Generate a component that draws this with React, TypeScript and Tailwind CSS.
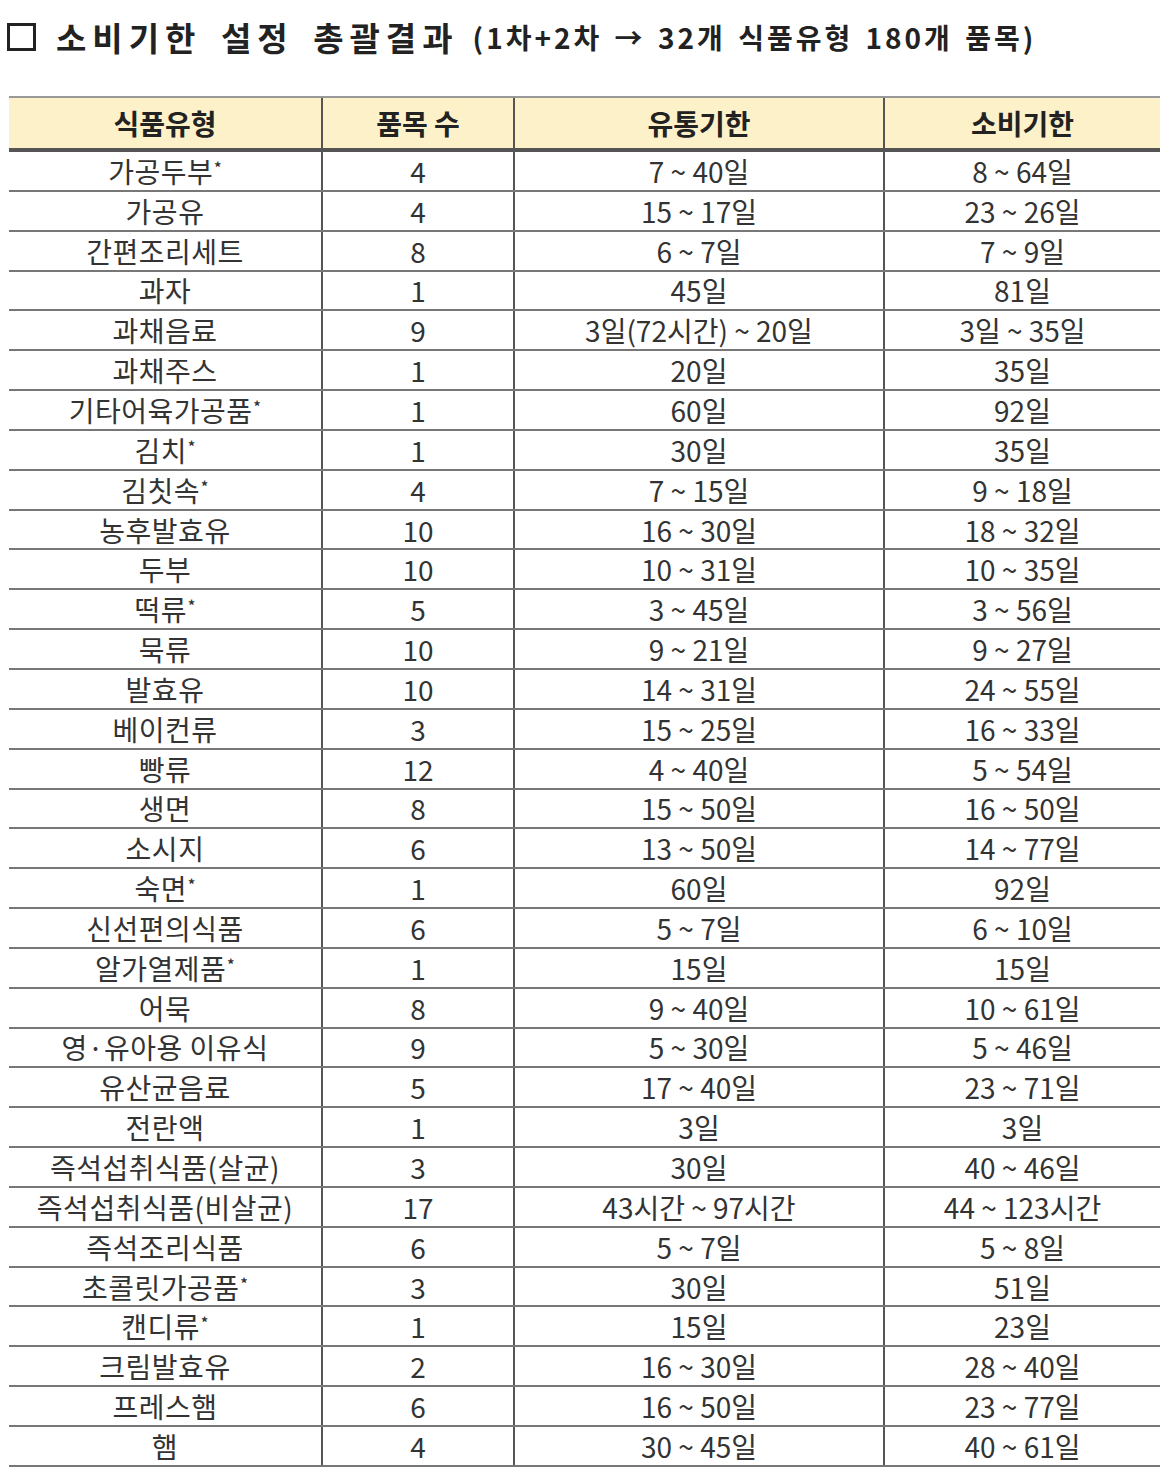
const rows: [string, boolean, string, string, string][] = [
  ['가공두부', true, '4', '7 ~ 40일', '8 ~ 64일'],
  ['가공유', false, '4', '15 ~ 17일', '23 ~ 26일'],
  ['간편조리세트', false, '8', '6 ~ 7일', '7 ~ 9일'],
  ['과자', false, '1', '45일', '81일'],
  ['과채음료', false, '9', '3일(72시간) ~ 20일', '3일 ~ 35일'],
  ['과채주스', false, '1', '20일', '35일'],
  ['기타어육가공품', true, '1', '60일', '92일'],
  ['김치', true, '1', '30일', '35일'],
  ['김칫속', true, '4', '7 ~ 15일', '9 ~ 18일'],
  ['농후발효유', false, '10', '16 ~ 30일', '18 ~ 32일'],
  ['두부', false, '10', '10 ~ 31일', '10 ~ 35일'],
  ['떡류', true, '5', '3 ~ 45일', '3 ~ 56일'],
  ['묵류', false, '10', '9 ~ 21일', '9 ~ 27일'],
  ['발효유', false, '10', '14 ~ 31일', '24 ~ 55일'],
  ['베이컨류', false, '3', '15 ~ 25일', '16 ~ 33일'],
  ['빵류', false, '12', '4 ~ 40일', '5 ~ 54일'],
  ['생면', false, '8', '15 ~ 50일', '16 ~ 50일'],
  ['소시지', false, '6', '13 ~ 50일', '14 ~ 77일'],
  ['숙면', true, '1', '60일', '92일'],
  ['신선편의식품', false, '6', '5 ~ 7일', '6 ~ 10일'],
  ['알가열제품', true, '1', '15일', '15일'],
  ['어묵', false, '8', '9 ~ 40일', '10 ~ 61일'],
  ['영·유아용 이유식', false, '9', '5 ~ 30일', '5 ~ 46일'],
  ['유산균음료', false, '5', '17 ~ 40일', '23 ~ 71일'],
  ['전란액', false, '1', '3일', '3일'],
  ['즉석섭취식품(살균)', false, '3', '30일', '40 ~ 46일'],
  ['즉석섭취식품(비살균)', false, '17', '43시간 ~ 97시간', '44 ~ 123시간'],
  ['즉석조리식품', false, '6', '5 ~ 7일', '5 ~ 8일'],
  ['초콜릿가공품', true, '3', '30일', '51일'],
  ['캔디류', true, '1', '15일', '23일'],
  ['크림발효유', false, '2', '16 ~ 30일', '28 ~ 40일'],
  ['프레스햄', false, '6', '16 ~ 50일', '23 ~ 77일'],
  ['햄', false, '4', '30 ~ 45일', '40 ~ 61일'],
];

const font = { fontFamily: '"Noto Sans CJK KR", "Noto Sans", sans-serif' };

export default function App() {
  return (
    <div className="w-[1176px] h-[1476px] bg-white text-[#333]" style={font}>
      <div className="flex items-center pl-[7px] pt-[12px] h-[62px]">
        <div className="w-[29px] h-[28px] border-[3px] border-[#222] shrink-0" />
        <div className="ml-[20px] text-[33px] font-bold text-[#222] tracking-[6px] [word-spacing:6px] leading-none">
          소비기한 설정 총괄결과
        </div>
        <div className="ml-[14px] text-[28px] font-bold text-[#222] tracking-[3px] [word-spacing:3px] leading-none">
          (1차+2차 → 32개 식품유형 180개 품목)
        </div>
      </div>

      <div className="ml-[9px] mt-[34px] w-[1151px]">
        <div className="flex h-[56px] bg-[#fdf1c9] border-t-2 border-[#999] border-b-[4px] border-b-[#555] text-[28px] font-bold text-[#222]">
          <div className="w-[314px] flex items-center justify-center border-r-2 border-[#555]">식품유형</div>
          <div className="w-[192px] flex items-center justify-center border-r-2 border-[#555]">품목 수</div>
          <div className="w-[370px] flex items-center justify-center border-r-2 border-[#555]">유통기한</div>
          <div className="flex-1 flex items-center justify-center">소비기한</div>
        </div>
        {rows.map(([name, star, n, a, b]) => (
          <div key={name} className="flex h-[39.85px] border-b-2 border-[#777] text-[28px] leading-none">
            <div className="w-[314px] flex items-center justify-center border-r-2 border-[#555] tracking-[0.5px]">
              <span>
                {name}
                {star && <span className="relative -top-[10px] text-[14px] font-bold ml-[1px]">*</span>}
              </span>
            </div>
            <div className="w-[192px] flex items-center justify-center border-r-2 border-[#555]">{n}</div>
            <div className="w-[370px] flex items-center justify-center border-r-2 border-[#555]">{a}</div>
            <div className="flex-1 flex items-center justify-center">{b}</div>
          </div>
        ))}
      </div>
    </div>
  );
}
